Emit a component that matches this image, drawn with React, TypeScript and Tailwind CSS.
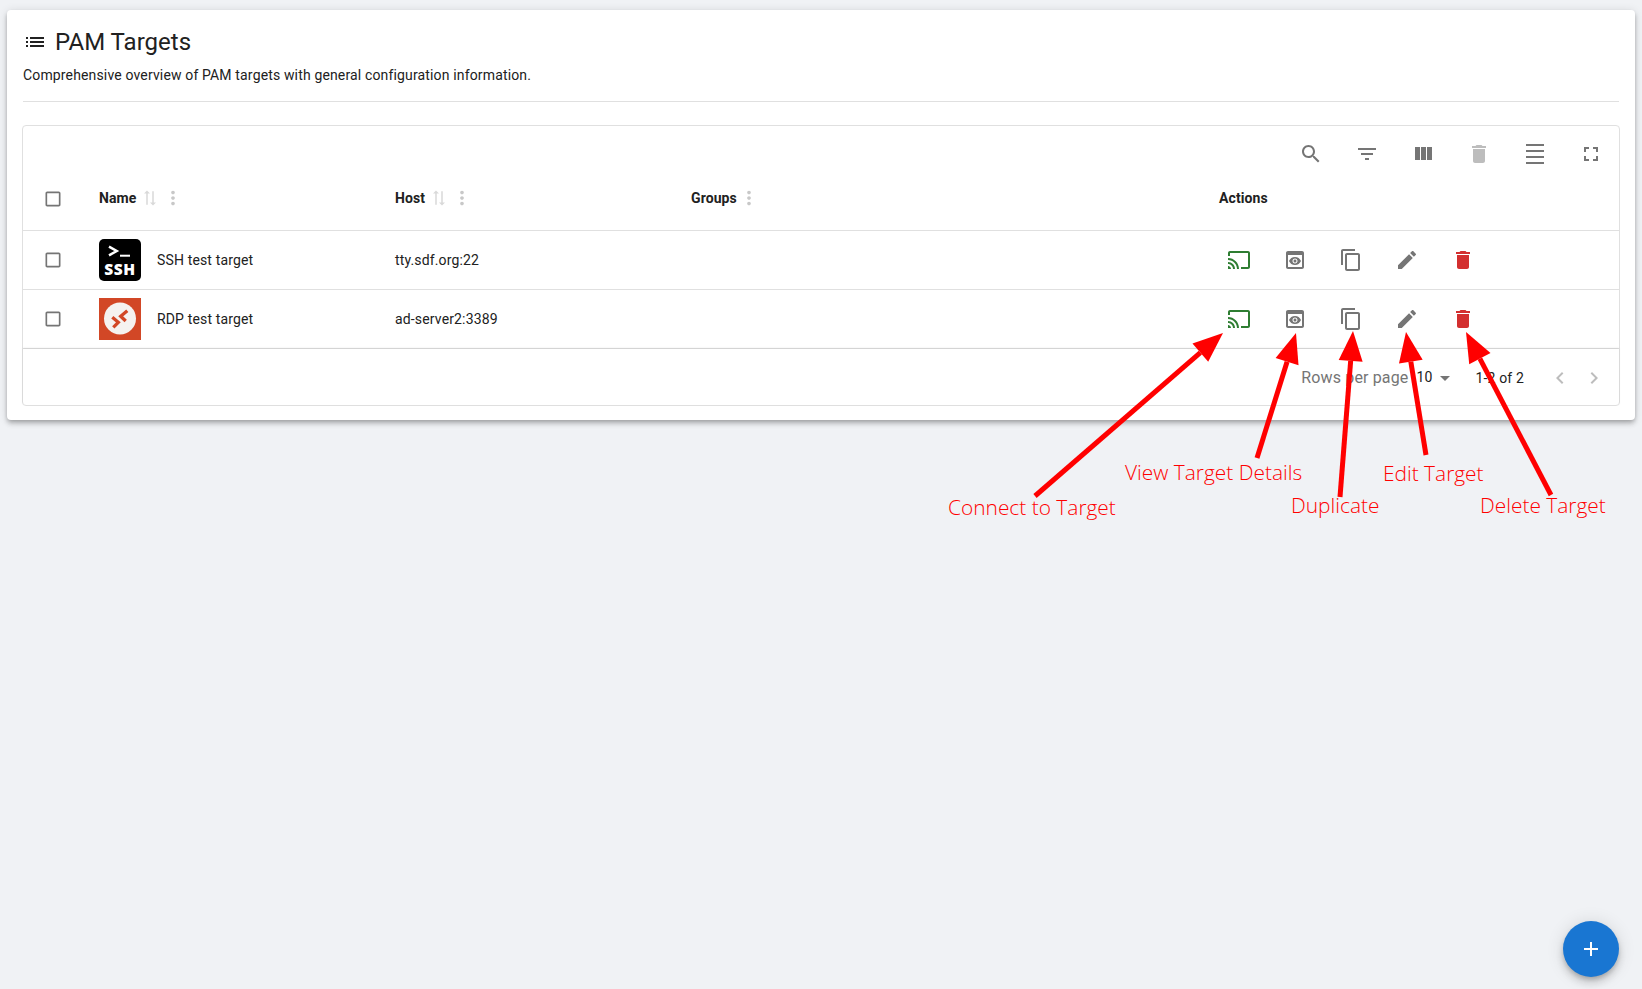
const icons = {
  list: "M3 13h2v-2H3v2zm0 4h2v-2H3v2zm0-8h2V7H3v2zm4 4h14v-2H7v2zm0 4h14v-2H7v2zM7 7v2h14V7H7z",
  search: "M15.5 14h-.79l-.28-.27C15.41 12.59 16 11.11 16 9.5 16 5.91 13.09 3 9.5 3S3 5.91 3 9.5 5.91 16 9.5 16c1.61 0 3.09-.59 4.23-1.57l.27.28v.79l5 4.99L20.49 19l-4.99-5zm-6 0C7.01 14 5 11.99 5 9.5S7.01 5 9.5 5 14 7.01 14 9.5 11.99 14 9.5 14z",
  filter: "M10 18h4v-2h-4v2zM3 6v2h18V6H3zm3 7h12v-2H6v2z",
  columns: "M10 18h5V5h-5v13zm-6 0h5V5H4v13zM16 5v13h5V5h-5z",
  trash: "M6 19c0 1.1.9 2 2 2h8c1.1 0 2-.9 2-2V7H6v12zM19 4h-3.5l-1-1h-5l-1 1H5v2h14V4z",
  density: "M3 2h18v2H3zm0 18h18v2H3zm0-6h18v2H3zm0-6h18v2H3z",
  fullscreen: "M7 14H5v5h5v-2H7v-3zm-2-4h2V7h3V5H5v5zm12 7h-3v2h5v-5h-2v3zM14 5v2h3v3h2V5h-5z",
  cast: "M21 3H3c-1.1 0-2 .9-2 2v3h2V5h18v14h-7v2h7c1.1 0 2-.9 2-2V5c0-1.1-.9-2-2-2zM1 18v3h3c0-1.66-1.34-3-3-3zm0-4v2c2.76 0 5 2.24 5 5h2c0-3.87-3.13-7-7-7zm0-4v2c4.97 0 9 4.03 9 9h2c0-6.08-4.93-11-11-11z",
  preview: "M19 3H5c-1.11 0-2 .9-2 2v14c0 1.1.89 2 2 2h14c1.1 0 2-.9 2-2V5c0-1.1-.89-2-2-2zm0 16H5V7h14v12zm-5.5-6c0 .83-.67 1.5-1.5 1.5s-1.5-.67-1.5-1.5.67-1.5 1.5-1.5 1.5.67 1.5 1.5zM12 9c-2.73 0-5.06 1.66-6 4 .94 2.34 3.27 4 6 4s5.06-1.66 6-4c-.94-2.34-3.27-4-6-4zm0 6.5c-1.38 0-2.5-1.12-2.5-2.5s1.12-2.5 2.5-2.5 2.5 1.12 2.5 2.5-1.12 2.5-2.5 2.5z",
  copy: "M16 1H4c-1.1 0-2 .9-2 2v14h2V3h12V1zm3 4H8c-1.1 0-2 .9-2 2v14c0 1.1.9 2 2 2h11c1.1 0 2-.9 2-2V7c0-1.1-.9-2-2-2zm0 16H8V7h11v14z",
  edit: "M3 17.25V21h3.75L17.81 9.94l-3.75-3.75L3 17.25zM20.71 7.04c.39-.39.39-1.02 0-1.41l-2.34-2.34c-.39-.39-1.02-.39-1.41 0l-1.83 1.83 3.75 3.75 1.83-1.83z",
  sort: "M22 8l-4-4v3H3v2h15v3zM2 16l4 4v-3h15v-2H6v-3z",
  more: "M12 8c1.1 0 2-.9 2-2s-.9-2-2-2-2 .9-2 2 .9 2 2 2zm0 2c-1.1 0-2 .9-2 2s.9 2 2 2 2-.9 2-2-.9-2-2-2zm0 6c-1.1 0-2 .9-2 2s.9 2 2 2 2-.9 2-2-.9-2-2-2z",
  checkbox: "M19 5v14H5V5h14m0-2H5c-1.1 0-2 .9-2 2v14c0 1.1.9 2 2 2h14c1.1 0 2-.9 2-2V5c0-1.1-.9-2-2-2z",
  dropdown: "M7 10l5 5 5-5z",
  left: "M15.41 7.41 14 6l-6 6 6 6 1.41-1.41L10.83 12z",
  right: "M10 6 8.59 7.41 13.17 12l-4.58 4.59L10 18l6-6z",
  add: "M19 13h-6v6h-2v-6H5v-2h6V5h2v6h6v2z",
};

function Icon({ d, className }: { d: string; className?: string }) {
  return (
    <svg viewBox="0 0 24 24" className={className ?? "h-6 w-6"} fill="currentColor">
      <path d={d} />
    </svg>
  );
}

function HeaderLabel({ label, sortable, menu = true }: { label: string; sortable?: boolean; menu?: boolean }) {
  return (
    <div className="flex items-center">
      <span className="text-[14px] leading-[24px] font-bold tracking-[0.1px] text-[#212121]">{label}</span>
      {sortable && <Icon d={icons.sort} className="ml-[5px] h-[18px] w-[18px] rotate-90 text-[#d9d9d9]" />}
      {menu && <Icon d={icons.more} className={`h-[22px] w-[22px] text-[#c8c8c8] ${sortable ? "ml-[3px]" : "ml-[1px]"}`} />}
    </div>
  );
}

function Checkbox() {
  return <Icon d={icons.checkbox} className="h-5 w-5 text-[#757575]" />;
}

function SshLogo() {
  return (
    <svg viewBox="0 0 42 42" className="h-[42px] w-[42px] shrink-0">
      <rect width="42" height="42" rx="5" fill="#000" />
      <path d="M10 7.7 17.7 12 10 16.3" fill="none" stroke="#fff" strokeWidth="2.5" />
      <path d="M21 16.7H31" stroke="#fff" strokeWidth="2" />
      <text
        x="21"
        y="36"
        textAnchor="middle"
        fill="#fff"
        fontFamily="'Open Sans', sans-serif"
        fontWeight="800"
        fontSize="15.5"
        letterSpacing="0.6"
      >
        SSH
      </text>
    </svg>
  );
}

function RdpLogo() {
  return (
    <svg viewBox="0 0 42 42" className="h-[42px] w-[42px] shrink-0">
      <rect width="42" height="42" fill="#d24726" />
      <circle cx="21" cy="20.5" r="16" fill="#f5f2f0" />
      <path
        d="M28.3 12.7 21.7 18.3 26.7 23M13.3 19.3 19.3 24.3 14.3 29.3"
        fill="none"
        stroke="#d24726"
        strokeWidth="3.3"
      />
    </svg>
  );
}

const rows = [
  { name: "SSH test target", host: "tty.sdf.org:22", logo: <SshLogo /> },
  { name: "RDP test target", host: "ad-server2:3389", logo: <RdpLogo /> },
];

const toolbar = [
  { d: icons.search, color: "text-[#757575]" },
  { d: icons.filter, color: "text-[#757575]" },
  { d: icons.columns, color: "text-[#757575]" },
  { d: icons.trash, color: "text-[#bdbdbd]" },
  { d: icons.density, color: "text-[#757575]" },
  { d: icons.fullscreen, color: "text-[#757575]" },
];

const actions = [
  { d: icons.cast, color: "text-[#2e7d32]" },
  { d: icons.preview, color: "text-[#757575]" },
  { d: icons.copy, color: "text-[#757575]" },
  { d: icons.edit, color: "text-[#757575]" },
  { d: icons.trash, color: "text-[#d32f2f]" },
];

// annotation arrows, tail to tip
const arrows = [
  [1035, 496, 1223, 333],
  [1257, 458, 1296, 333],
  [1340, 497, 1353, 331],
  [1426, 455, 1406, 332],
  [1551, 495, 1466, 332],
];

const labels = [
  { text: "Connect to Target", className: "left-[948px] top-[493px]" },
  { text: "View Target Details", className: "left-[1125px] top-[458px]" },
  { text: "Duplicate", className: "left-[1291px] top-[491px]" },
  { text: "Edit Target", className: "left-[1383px] top-[459px]" },
  { text: "Delete Target", className: "left-[1480px] top-[491px]" },
];

function Annotations() {
  return (
    <>
      <svg className="pointer-events-none absolute top-0 left-0 h-[989px] w-[1642px]" viewBox="0 0 1642 989">
        {arrows.map(([x1, y1, x2, y2]) => {
          const len = Math.hypot(x2 - x1, y2 - y1);
          const ux = (x2 - x1) / len;
          const uy = (y2 - y1) / len;
          const bx = x2 - ux * 30;
          const by = y2 - uy * 30;
          const head = `${x2},${y2} ${bx - uy * 12},${by + ux * 12} ${bx + uy * 12},${by - ux * 12}`;
          return (
            <g key={x1}>
              <line x1={x1} y1={y1} x2={bx} y2={by} stroke="#ff0000" strokeWidth="5" />
              <polygon points={head} fill="#ff0000" />
            </g>
          );
        })}
      </svg>
      {labels.map((l) => (
        <span
          key={l.text}
          className={`absolute text-[20.9px] leading-[28px] font-light whitespace-nowrap text-[#ff0000] [font-family:'Open_Sans',sans-serif] ${l.className}`}
        >
          {l.text}
        </span>
      ))}
    </>
  );
}

export default function App() {
  return (
    <div className="relative min-h-[989px] bg-[#f0f2f5] pt-[10px] pr-[7px] pl-[7px] [font-family:Roboto,sans-serif]">
      <div className="rounded bg-white px-4 pb-[14px] shadow-[0_2px_4px_-1px_rgba(0,0,0,0.2),0_4px_5px_0_rgba(0,0,0,0.14),0_1px_10px_0_rgba(0,0,0,0.12)]">
        <div className="flex h-[48px] items-center pt-[16px]">
          <Icon d={icons.list} className="h-6 w-6 text-[#212121]" />
          <h1 className="ml-[8px] text-[24px] leading-[32px] font-normal text-[#212121]">PAM Targets</h1>
        </div>
        <p className="mt-[5px] h-[24px] text-[14px] leading-[24px] tracking-[0.15px] text-[#212121]">
          Comprehensive overview of PAM targets with general configuration information.
        </p>
        <div className="mt-[14px] border-t border-[#e0e0e0]" />

        <div className="-mx-px mt-[23px] rounded border border-[#e0e0e0]">
          <div className="flex h-[56px] items-center justify-end gap-8 pr-[16px]">
            {toolbar.map((t, i) => (
              <Icon key={i} d={t.d} className={`h-6 w-6 ${t.color}`} />
            ))}
          </div>
          <table className="w-full table-fixed border-collapse">
            <colgroup>
              <col className="w-[60px]" />
              <col className="w-[296px]" />
              <col className="w-[296px]" />
              <col className="w-[528px]" />
              <col />
            </colgroup>
            <thead>
              <tr className="h-[48px] border-b border-[#e0e0e0] text-left">
                <th className="pb-[13px] pl-[20px] font-normal">
                  <Checkbox />
                </th>
                <th className="pb-4 pl-4 font-normal">
                  <HeaderLabel label="Name" sortable />
                </th>
                <th className="pb-4 pl-4 font-normal">
                  <HeaderLabel label="Host" sortable />
                </th>
                <th className="pb-4 pl-4 font-normal">
                  <HeaderLabel label="Groups" />
                </th>
                <th className="pb-4 pl-4 font-normal">
                  <HeaderLabel label="Actions" menu={false} />
                </th>
              </tr>
            </thead>
            <tbody>
              {rows.map((r) => (
                <tr key={r.name} className="h-[59px] border-b border-[#e0e0e0]">
                  <td className="pl-[20px]">
                    <Checkbox />
                  </td>
                  <td className="pl-4">
                    <div className="flex items-center gap-4 text-[14px] tracking-[0.15px] text-[#212121]">
                      {r.logo}
                      <span className="pt-[1px]">{r.name}</span>
                    </div>
                  </td>
                  <td className="pt-[1px] pl-4 text-[14px] tracking-[0.15px] text-[#212121]">{r.host}</td>
                  <td />
                  <td className="pl-4">
                    <div className="flex items-center gap-8 pl-[8px]">
                      {actions.map((a, i) => (
                        <Icon key={i} d={a.d} className={`h-6 w-6 ${a.color}`} />
                      ))}
                    </div>
                  </td>
                </tr>
              ))}
            </tbody>
          </table>
          <div className="flex h-[56px] items-center justify-end pt-[3px] pr-[13px] shadow-[0_-1px_2px_rgba(0,0,0,0.08)]">
            <span className="text-[16px] tracking-[0.15px] text-[#757575]">Rows per page</span>
            <span className="mb-[2px] ml-[8px] text-[14px] tracking-[0.15px] text-[#212121]">10</span>
            <Icon d={icons.dropdown} className="ml-0 h-6 w-6 text-[#757575]" />
            <span className="ml-[19px] text-[14px] tracking-[0.15px] text-[#212121]">1-2 of 2</span>
            <Icon d={icons.left} className="ml-[24px] h-6 w-6 text-[#bdbdbd]" />
            <Icon d={icons.right} className="ml-[10px] h-6 w-6 text-[#bdbdbd]" />
          </div>
        </div>
      </div>

      <Annotations />

      <button className="fixed right-[23px] bottom-[12px] flex h-14 w-14 items-center justify-center rounded-full bg-[#1976d2] text-white shadow-[0_3px_5px_-1px_rgba(0,0,0,0.2),0_6px_10px_0_rgba(0,0,0,0.14),0_1px_18px_0_rgba(0,0,0,0.12)]">
        <Icon d={icons.add} className="h-6 w-6" />
      </button>
    </div>
  );
}
